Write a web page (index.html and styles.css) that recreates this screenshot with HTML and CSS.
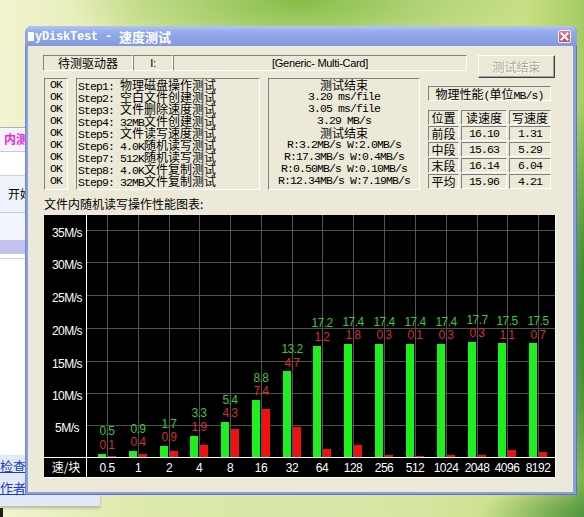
FILE: index.html
```html
<!DOCTYPE html>
<html lang="zh-CN">
<head>
<meta charset="utf-8">
<title>MyDiskTest - 速度测试</title>
<link rel="stylesheet" href="styles.css">
</head>
<body>
<div class="bgwin">
  <div class="bg-head"><span class="bg-pink">内测</span></div>
  <div class="bg-white1"></div>
  <div class="bg-start">开始</div>
  <div class="bg-pale"></div>
  <div class="bg-band"></div>
  <div class="bg-white2"></div>
  <div class="bg-links"><a href="#">检查</a><a href="#">作者</a></div>
</div>
<div class="deskmark"></div>

<div class="win">
  <div class="titlebar">
    <div class="title"><span class="tblk"></span><span class="tl">yDiskTest - </span><span class="tc">速度测试</span></div>
    <div class="close"><svg width="11" height="11" viewBox="0 0 11 11"><path d="M2.5 2.5L8.5 8.5M8.5 2.5L2.5 8.5" stroke="#fff" stroke-width="2" stroke-linecap="square"/></svg></div>
  </div>
  <div class="client">
    <div class="row1">
      <div class="field f1">待测驱动器</div>
      <div class="field f2 en">I:</div>
      <div class="field f3 en">[Generic- Multi-Card]</div>
      <div class="btn">测试结束</div>
    </div>
    <div class="row2">
      <div class="box okbox">
        <div class="m">OK</div><div class="m">OK</div><div class="m">OK</div>
        <div class="m">OK</div><div class="m">OK</div><div class="m">OK</div>
        <div class="m">OK</div><div class="m">OK</div><div class="m">OK</div>
      </div>
      <div class="box steps">
        <div><span class="m">Step1: </span>物理磁盘操作测试</div>
        <div><span class="m">Step2: </span>空白文件创建测试</div>
        <div><span class="m">Step3: </span>文件删除速度测试</div>
        <div><span class="m">Step4: 32MB</span>文件创建测试</div>
        <div><span class="m">Step5: </span>文件读写速度测试</div>
        <div><span class="m">Step6: 4.0K</span>随机读写测试</div>
        <div><span class="m">Step7: 512K</span>随机读写测试</div>
        <div><span class="m">Step8: 4.0K</span>文件复制测试</div>
        <div><span class="m">Step9: 32MB</span>文件复制测试</div>
      </div>
      <div class="box results">
        <div>测试结束</div>
        <div class="m">3.20 ms/file</div>
        <div class="m">3.05 ms/file</div>
        <div class="m">3.29 MB/s</div>
        <div>测试结束</div>
        <div class="m">R:3.2MB/s W:2.0MB/s</div>
        <div class="m">R:17.3MB/s W:0.4MB/s</div>
        <div class="m">R:0.50MB/s W:0.10MB/s</div>
        <div class="m">R:12.34MB/s W:7.19MB/s</div>
      </div>
      <div class="panel">
        <div class="ptitle">物理性能<span class="m">(</span>单位<span class="m">MB/s)</span></div>
        <div class="ptable">
          <div class="cell">位置</div><div class="cell">读速度</div><div class="cell">写速度</div>
          <div class="cell">前段</div><div class="cell m">16.10</div><div class="cell m">1.31</div>
          <div class="cell">中段</div><div class="cell m">15.63</div><div class="cell m">5.29</div>
          <div class="cell">末段</div><div class="cell m">16.14</div><div class="cell m">6.04</div>
          <div class="cell">平均</div><div class="cell m">15.96</div><div class="cell m">4.21</div>
        </div>
      </div>
    </div>
    <div class="charttitle">文件内随机读写操作性能图表:</div>
    <div class="chart">
      <svg class="plot" width="511" height="262" viewBox="0 0 511 262">
        <path class="grid" d="M63.5 0V242M94.5 0V242M125.5 0V242M155.5 0V242M186.5 0V242M217.5 0V242M248.5 0V242M278.5 0V242M309.5 0V242M340.5 0V242M371.5 0V242M402.5 0V242M433.5 0V242M463.5 0V242M494.5 0V242M42 210.5H511M42 178.5H511M42 146.5H511M42 113.5H511M42 80.5H511M42 47.5H511M42 15.5H511"/>
        <g class="gbar">
          <rect x="54" y="239" width="8" height="3"/>
          <rect x="85" y="236" width="8" height="6"/>
          <rect x="116" y="231" width="8" height="11"/>
          <rect x="146" y="221" width="8" height="21"/>
          <rect x="177" y="207" width="8" height="35"/>
          <rect x="208" y="185" width="8" height="57"/>
          <rect x="239" y="156" width="8" height="86"/>
          <rect x="269" y="131" width="8" height="111"/>
          <rect x="300" y="129" width="8" height="113"/>
          <rect x="331" y="129" width="8" height="113"/>
          <rect x="362" y="129" width="8" height="113"/>
          <rect x="393" y="129" width="8" height="113"/>
          <rect x="424" y="127" width="8" height="115"/>
          <rect x="454" y="128" width="8" height="114"/>
          <rect x="485" y="128" width="8" height="114"/>
        </g>
        <g class="rbar">
          <rect x="64" y="241" width="8" height="1"/>
          <rect x="95" y="239" width="8" height="3"/>
          <rect x="126" y="236" width="8" height="6"/>
          <rect x="156" y="230" width="8" height="12"/>
          <rect x="187" y="214" width="8" height="28"/>
          <rect x="218" y="194" width="8" height="48"/>
          <rect x="249" y="212" width="8" height="30"/>
          <rect x="279" y="234" width="8" height="8"/>
          <rect x="310" y="230" width="8" height="12"/>
          <rect x="341" y="240" width="8" height="2"/>
          <rect x="372" y="241" width="8" height="1"/>
          <rect x="403" y="240" width="8" height="2"/>
          <rect x="434" y="240" width="8" height="2"/>
          <rect x="464" y="235" width="8" height="7"/>
          <rect x="495" y="237" width="8" height="5"/>
        </g>
        <g class="gval">
          <text x="63" y="220.3">0.5</text>
          <text x="94" y="217.7">0.9</text>
          <text x="125" y="212.5">1.7</text>
          <text x="155" y="202.1">3.3</text>
          <text x="186" y="188.5">5.4</text>
          <text x="217" y="166.5">8.8</text>
          <text x="248" y="138">13.2</text>
          <text x="278" y="112">17.2</text>
          <text x="309" y="110.8">17.4</text>
          <text x="340" y="110.8">17.4</text>
          <text x="371" y="110.8">17.4</text>
          <text x="402" y="110.8">17.4</text>
          <text x="433" y="108.8">17.7</text>
          <text x="463" y="110.1">17.5</text>
          <text x="494" y="110.1">17.5</text>
        </g>
        <g class="rval">
          <text x="63" y="233.8">0.1</text>
          <text x="94" y="231.2">0.4</text>
          <text x="125" y="226">0.9</text>
          <text x="155" y="215.6">1.9</text>
          <text x="186" y="202">4.3</text>
          <text x="217" y="180">7.4</text>
          <text x="248" y="151.5">4.7</text>
          <text x="278" y="125.5">1.2</text>
          <text x="309" y="124.3">1.8</text>
          <text x="340" y="124.3">0.3</text>
          <text x="371" y="124.3">0.1</text>
          <text x="402" y="124.3">0.3</text>
          <text x="433" y="122.3">0.3</text>
          <text x="463" y="123.6">1.1</text>
          <text x="494" y="123.6">0.7</text>
        </g>
        <g class="ylab">
          <text x="23" y="217">5M/s</text>
          <text x="23" y="185">10M/s</text>
          <text x="23" y="153">15M/s</text>
          <text x="23" y="120">20M/s</text>
          <text x="23" y="87">25M/s</text>
          <text x="23" y="54">30M/s</text>
          <text x="23" y="22">35M/s</text>
        </g>
        <g class="xlab">
          <text class="cjk" x="22" y="257">速/块</text>
          <text x="63" y="257">0.5</text>
          <text x="94" y="257">1</text>
          <text x="125" y="257">2</text>
          <text x="155" y="257">4</text>
          <text x="186" y="257">8</text>
          <text x="217" y="257">16</text>
          <text x="248" y="257">32</text>
          <text x="278" y="257">64</text>
          <text x="309" y="257">128</text>
          <text x="340" y="257">256</text>
          <text x="371" y="257">512</text>
          <text x="402" y="257">1024</text>
          <text x="433" y="257">2048</text>
          <text x="463" y="257">4096</text>
          <text x="494" y="257">8192</text>
        </g>
        <path class="axis" d="M42.5 0V262M0 242.5H511"/>
      </svg>
    </div>
  </div>
</div>
</body>
</html>
```

FILE: styles.css
```css
* { box-sizing: border-box; }
html, body { margin: 0; padding: 0; }
body {
  width: 584px;
  height: 517px;
  overflow: hidden;
  position: relative;
  font-family: "Noto Sans CJK SC", sans-serif;
  font-size: 12px;
  color: #000;
  background:
    radial-gradient(70px 240px at 612px 320px, #2a7a34 0%, #3f8f3a 45%, rgba(80,150,60,0) 100%),
    radial-gradient(230px 70px at 300px 0, #84bd46 0%, rgba(132,189,70,0) 100%),
    radial-gradient(120px 40px at 600px 517px, #4a8f3c 0%, rgba(74,143,60,0) 100%),
    linear-gradient(90deg, #f3f4d0 0%, #dde9a8 25%, #d9e8a6 45%, #d8e6a4 70%, #c9df84 90%, #a5cc62 100%);
}

/* background window on the desktop */
.bgwin {
  position: absolute;
  left: 0;
  top: 127px;
  width: 100px;
  display: flex;
  flex-direction: column;
  border-top: 1px solid #a8b0c8;
}
.bg-head {
  height: 24px;
  background: #f7f3fb;
  border-bottom: 1px solid #c8c8d4;
  padding-left: 4px;
  line-height: 22px;
}
.bg-pink { color: #e02cd8; font-weight: bold; font-size: 12px; }
.bg-white1 { height: 24px; background: #fff; border-bottom: 1px solid #d0d0dc; }
.bg-start {
  height: 37px;
  background: #eef3fb;
  border-bottom: 1px solid #c8ccd8;
  padding-left: 8px;
  line-height: 36px;
  font-size: 12px;
}
.bg-pale { height: 27px; background: #f3f5fc; }
.bg-band { height: 14px; background: #c3c3ee; }
.bg-white2 {
  height: 201px;
  background: linear-gradient(#fff 4px, #d4d4dc 4px 5px, #fff 5px);
}
.bg-links {
  height: 51px;
  background: #e2eaf7;
  display: flex;
  flex-direction: column;
  box-shadow: 0 2px 3px rgba(60, 70, 90, .35);
}
.bg-links a {
  color: #1a3cc8;
  font-size: 13px;
  line-height: 22px;
  text-decoration: underline;
}
.deskmark {
  position: absolute;
  left: 0;
  top: 508px;
  width: 3px;
  height: 9px;
  background: #1c1c1c;
}

/* main window */
.win {
  position: absolute;
  left: 25px;
  top: 26px;
  width: 552px;
  height: 469px;
  display: flex;
  flex-direction: column;
  background: #8a9fe2;
  border-radius: 7px 7px 0 0;
  box-shadow: inset 1px 0 #7486d0, inset -1px -1px #5f72c4;
}
.titlebar {
  height: 20px;
  flex: none;
  display: flex;
  align-items: center;
  justify-content: space-between;
  padding: 0 6px 0 3px;
  border-radius: 7px 7px 0 0;
  background: linear-gradient(#b3c5f2 0%, #93abea 30%, #8aa2e4 70%, #8399df 100%);
}
.title { display: flex; align-items: center; color: #fff; padding-top: 1px; }
.tblk { width: 6px; height: 9px; background: #fff; margin-right: 1px; }
.tl {
  font: bold 12px "Liberation Mono", monospace;
  letter-spacing: -0.2px;
  white-space: pre;
}
.tc { font: bold 13px "Noto Sans CJK SC", sans-serif; letter-spacing: 0; }
.close {
  width: 13px;
  height: 13px;
  background: linear-gradient(#e07890, #c44c6c);
  border: 1px solid #f2eefa;
  border-radius: 2px;
  display: flex;
  align-items: center;
  justify-content: center;
}
.close svg { display: block; }

.client {
  flex: 1;
  margin: 0 4px 3px 3px;
  background: #ece9d8;
  display: flex;
  flex-direction: column;
}

.m {
  font-family: "Liberation Mono", monospace;
  font-size: 11.5px;
  letter-spacing: -0.9px;
  white-space: pre;
}

/* row 1 */
.row1 { display: flex; padding: 9px 0 0 15px; height: 32px; }
.field {
  height: 16px;
  border-top: 1px solid #808080;
  border-left: 1px solid #808080;
  border-bottom: 1px solid #fff;
  border-right: 1px solid #fff;
  display: flex;
  align-items: center;
  justify-content: center;
  font-size: 12px;
  line-height: 14px;
}
.field.en { font-family: "Liberation Sans", sans-serif; font-size: 11px; letter-spacing: -0.3px; }
.f1 { width: 90px; }
.f2 { width: 40px; }
.f3 { width: 294px; }
.btn {
  margin-left: 11px;
  width: 77px;
  height: 23px;
  border: 1px solid;
  border-color: #fff #404040 #404040 #fff;
  box-shadow: inset -1px -1px #a0a0a0;
  display: flex;
  align-items: center;
  justify-content: center;
  color: #aca899;
  text-shadow: 1px 1px #fff;
  font-size: 12px;
}

/* row 2 */
.row2 { display: flex; gap: 8px; padding-left: 16px; height: 112px; }
.box {
  height: 112px;
  border-top: 1px solid #808080;
  border-left: 1px solid #808080;
  border-bottom: 1px solid #fff;
  border-right: 1px solid #fff;
  line-height: 12px;
  font-size: 12px;
}
.box > div { height: 12px; white-space: nowrap; }
.okbox { width: 24px; text-align: center; }
.steps { width: 184px; padding-left: 1px; }
.results { width: 152px; text-align: center; }

.panel { width: 123px; display: flex; flex-direction: column; }
.ptitle {
  margin-top: 8px;
  height: 15px;
  border-top: 1px solid #808080;
  border-left: 1px solid #808080;
  border-bottom: 1px solid #fff;
  border-right: 1px solid #fff;
  text-align: center;
  font-size: 12px;
  line-height: 13px;
  white-space: nowrap;
}
.ptable {
  margin-top: 9px;
  display: grid;
  grid-template-columns: 31px 46px 42px;
  grid-auto-rows: 15px;
  column-gap: 2px;
  row-gap: 1px;
}
.cell {
  border-top: 1px solid #808080;
  border-left: 1px solid #808080;
  border-bottom: 1px solid #fff;
  border-right: 1px solid #fff;
  text-align: center;
  font-size: 12px;
  line-height: 13px;
  white-space: nowrap;
}
.cell.m { font-size: 11.5px; }

/* chart */
.charttitle {
  margin-top: 7px;
  padding-left: 16px;
  height: 14px;
  line-height: 14px;
  font-size: 12px;
}
.chart {
  margin: 4px 0 0 16px;
  width: 512px;
  height: 263px;
  border-right: 1px solid #fff;
  border-bottom: 1px solid #fff;
  background: #000;
}
.plot { display: block; }
.grid { stroke: #525252; stroke-width: 1; fill: none; }
.axis { stroke: #fff; stroke-width: 1; fill: none; }
.gbar rect { fill: #1ef01e; }
.rbar rect { fill: #f01010; }
.plot text {
  font-family: "Liberation Sans", sans-serif;
  font-size: 12px;
  text-anchor: middle;
}
.gval text { fill: #3cc43c; letter-spacing: -0.6px; }
.rval text { fill: #d03030; letter-spacing: -0.6px; }
.ylab text { fill: #fff; letter-spacing: -0.5px; }
.xlab text { fill: #fff; letter-spacing: -0.5px; }
.xlab text.cjk { font-family: "Noto Sans CJK SC", sans-serif; letter-spacing: 0; }
```
